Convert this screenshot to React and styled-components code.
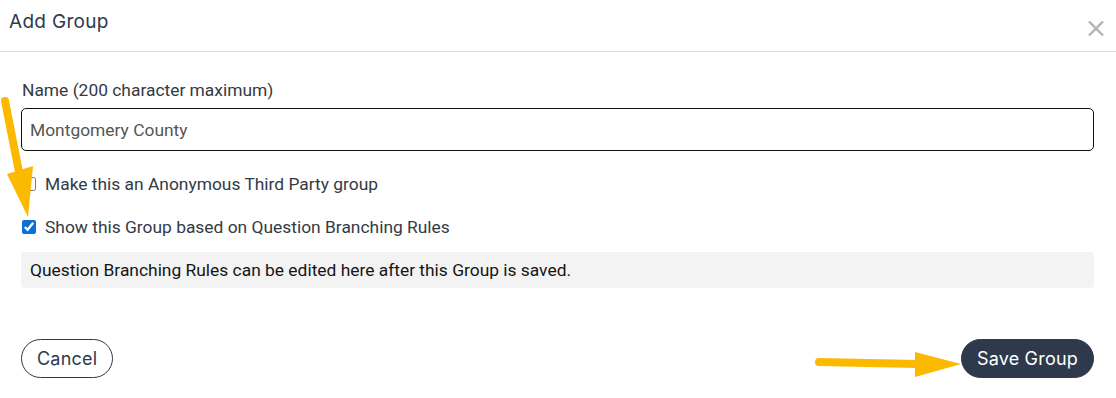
import React, { useState } from "react";
import styled, { createGlobalStyle } from "styled-components";

const GlobalStyle = createGlobalStyle`
  body {
    margin: 0;
    background: #fff;
    font-family: Roboto, "Liberation Sans", sans-serif;
  }
`;

const Dialog = styled.div`
  position: relative;
  width: 1116px;
  height: 398px;
  background: #fff;
  overflow: hidden;
`;

const Header = styled.div`
  display: flex;
  align-items: center;
  justify-content: space-between;
  height: 51px;
  padding: 0 12px 0 9px;
  border-bottom: 1px solid #dcdcdc;
`;

const Title = styled.h4`
  margin: 0 0 8px;
  font-family: Inter, "Open Sans", sans-serif;
  font-weight: 400;
  font-size: 19px;
  letter-spacing: 0.3px;
  color: #2e3a4b;
`;

const CloseBtn = styled.button`
  border: none;
  background: none;
  padding: 0;
  margin-top: 6px;
  width: 16px;
  height: 17px;
  cursor: pointer;
  display: flex;
`;

const Body = styled.div`
  padding: 26px 22px 0 21px;
`;

const Label = styled.label`
  display: block;
  margin-left: 1px;
  font-size: 17.4px;
  line-height: 24px;
  color: #333a44;
`;

const TextInput = styled.input`
  display: block;
  box-sizing: border-box;
  width: 100%;
  height: 43px;
  margin-top: 6px;
  padding: 0 8px;
  border: 1px solid #111;
  border-radius: 5px;
  font-family: Roboto, "Liberation Sans", sans-serif;
  font-size: 17.4px;
  color: #555;
  outline: none;
`;

const CheckRow = styled.label`
  display: flex;
  align-items: center;
  gap: 9px;
  height: 24px;
  margin-top: ${(p) => p.$gap}px;
  font-size: 17.4px;
  color: #333a44;

  input {
    margin: 0 0 0 1px;
    width: 14px;
    height: 14px;
    accent-color: #0b6fd6;
  }
`;

const Note = styled.div`
  box-sizing: border-box;
  height: 36px;
  margin-top: 13px;
  padding: 0 9px;
  display: flex;
  align-items: center;
  border-radius: 4px;
  background: #f3f3f3;
  font-size: 17.4px;
  color: #151515;
`;

const Footer = styled.div`
  display: flex;
  justify-content: space-between;
  align-items: center;
  margin-top: 51px;
`;

const PillButton = styled.button`
  height: 39px;
  padding: 0 15px;
  border-radius: 20px;
  border: 1px solid #2e3a4b;
  background: ${(p) => (p.$primary ? "#2e3a4b" : "#fff")};
  color: ${(p) => (p.$primary ? "#fff" : "#2e3a4b")};
  font-family: Inter, "Open Sans", sans-serif;
  font-size: 18px;
  letter-spacing: 0.2px;
  cursor: pointer;
`;

const Overlay = styled.svg`
  position: absolute;
  left: 0;
  top: 0;
  pointer-events: none;
`;

const ArrowColor = "#fbb900";

function Arrows() {
  return (
    <Overlay width="1116" height="398" viewBox="0 0 1116 398">
      <line x1="5" y1="101" x2="19" y2="172" stroke={ArrowColor} strokeWidth="8" strokeLinecap="round" />
      <polygon points="7,174 33,166 28,217" fill={ArrowColor} />
      <line x1="819" y1="362" x2="918" y2="364" stroke={ArrowColor} strokeWidth="8" strokeLinecap="round" />
      <polygon points="915,352 915,377 961,364" fill={ArrowColor} />
    </Overlay>
  );
}

function App() {
  const [name, setName] = useState("Montgomery County");
  const [anonymous, setAnonymous] = useState(false);
  const [branching, setBranching] = useState(true);

  return (
    <>
      <GlobalStyle />
      <Dialog>
        <Header>
          <Title>Add Group</Title>
          <CloseBtn aria-label="Close">
            <svg width="16" height="17" viewBox="0 0 16 17">
              <path d="M1 1.5 L15 15.5 M15 1.5 L1 15.5" stroke="#b3b3b3" strokeWidth="2.4" />
            </svg>
          </CloseBtn>
        </Header>
        <Body>
          <Label htmlFor="group-name">Name (200 character maximum)</Label>
          <TextInput id="group-name" value={name} onChange={(e) => setName(e.target.value)} />
          <CheckRow $gap={21}>
            <input type="checkbox" checked={anonymous} onChange={() => setAnonymous((v) => !v)} />
            Make this an Anonymous Third Party group
          </CheckRow>
          <CheckRow $gap={19}>
            <input type="checkbox" checked={branching} onChange={() => setBranching((v) => !v)} />
            Show this Group based on Question Branching Rules
          </CheckRow>
          {branching && (
            <Note>Question Branching Rules can be edited here after this Group is saved.</Note>
          )}
          <Footer>
            <PillButton>Cancel</PillButton>
            <PillButton $primary>Save Group</PillButton>
          </Footer>
        </Body>
        <Arrows />
      </Dialog>
    </>
  );
}

export default App;
